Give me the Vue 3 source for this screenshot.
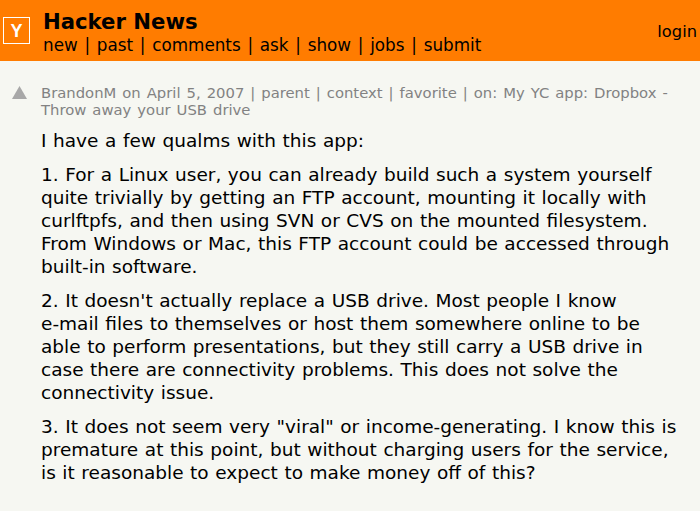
<template>
  <div class="page">
    <!-- top bar -->
    <header class="topbar">
      <div class="logo">Y</div>
      <div class="titles">
        <div class="site-name">Hacker News</div>
        <nav class="nav">
          <template v-for="(item, i) in navItems" :key="item">
            <span v-if="i > 0"> | </span>{{ item }}
          </template>
        </nav>
      </div>
      <div class="login">login</div>
    </header>

    <!-- comment -->
    <main class="comment">
      <svg class="vote" width="15" height="13" viewBox="0 0 15 13">
        <path d="M7.5 0 L15 13 L0 13 Z" fill="#a8a8a8" />
      </svg>
      <div class="comment-body">
        <div class="meta">BrandonM on April 5, 2007 | parent | context | favorite | on: My YC app: Dropbox -<br />Throw away your USB drive</div>
        <p v-for="para in paragraphs" :key="para[0]" class="para">
          <template v-for="line in para" :key="line">{{ line }}<br /></template>
        </p>
      </div>
    </main>
  </div>
</template>

<script setup>
const navItems = ['new', 'past', 'comments', 'ask', 'show', 'jobs', 'submit']

const paragraphs = [
  ['I have a few qualms with this app:'],
  [
    '1. For a Linux user, you can already build such a system yourself',
    'quite trivially by getting an FTP account, mounting it locally with',
    'curlftpfs, and then using SVN or CVS on the mounted filesystem.',
    'From Windows or Mac, this FTP account could be accessed through',
    'built-in software.',
  ],
  [
    "2. It doesn't actually replace a USB drive. Most people I know",
    'e-mail files to themselves or host them somewhere online to be',
    'able to perform presentations, but they still carry a USB drive in',
    'case there are connectivity problems. This does not solve the',
    'connectivity issue.',
  ],
  [
    '3. It does not seem very "viral" or income-generating. I know this is',
    'premature at this point, but without charging users for the service,',
    'is it reasonable to expect to make money off of this?',
  ],
]
</script>

<style>
html,
body {
  margin: 0;
  background: #f6f7f2;
}
</style>

<style scoped>
.page {
  width: 700px;
  height: 511px;
  overflow: hidden;
  background: #f6f7f2;
  font-family: 'DejaVu Sans', Verdana, sans-serif;
}

.topbar {
  height: 61px;
  box-sizing: border-box;
  background: #ff7c00;
  display: flex;
  align-items: flex-start;
  padding: 17px 3px 0 3px;
  color: #000;
}

.logo {
  width: 25px;
  height: 25px;
  border: 1px solid #fff;
  margin-right: 13px;
  color: #fff;
  font-family: 'Liberation Sans', Arial, sans-serif;
  font-size: 18px;
  font-weight: 700;
  line-height: 27px;
  text-align: center;
}

.titles {
  flex: 1;
  margin-top: -8px;
}

.site-name {
  font-size: 21.2px;
  font-weight: 700;
  line-height: 25px;
}

.nav {
  font-size: 16.8px;
  line-height: 20px;
  margin-top: 1px;
  word-spacing: 1.4px;
}

.login {
  font-size: 16.3px;
  line-height: 20px;
  margin-top: 5px;
}

.comment {
  display: flex;
  align-items: flex-start;
  padding: 23px 0 0 12px;
}

.vote {
  flex: none;
  margin-top: 2px;
  margin-right: 14px;
}

.comment-body {
  flex: 1;
  min-width: 0;
}

.meta {
  font-size: 14.8px;
  line-height: 17px;
  color: #828282;
  word-spacing: 1.3px;
  white-space: nowrap;
}

.para {
  margin: 11px 0 0;
  font-size: 18.5px;
  line-height: 23px;
  word-spacing: 0.7px;
  color: #000;
  white-space: nowrap;
}
</style>
